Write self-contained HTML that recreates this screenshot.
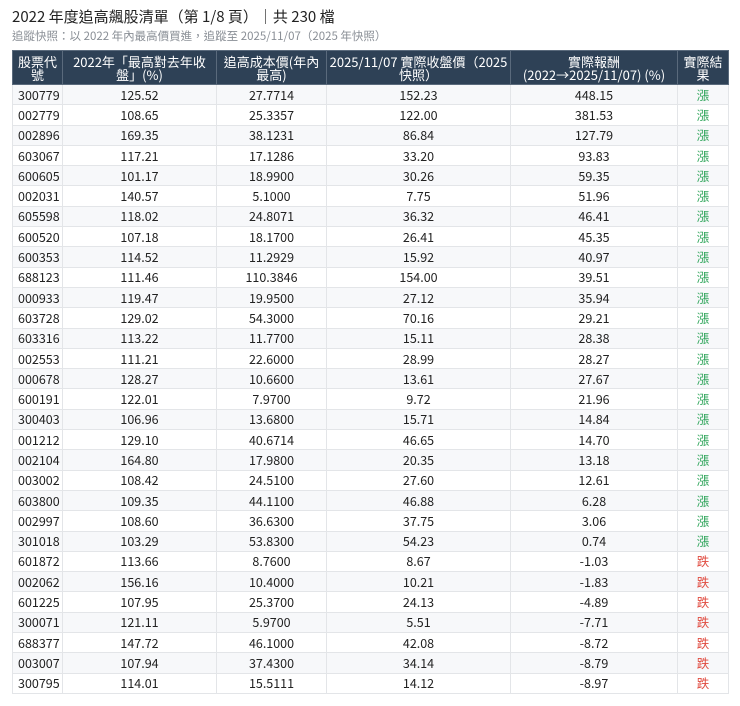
<!DOCTYPE html>
<html><head><meta charset="utf-8"><style>
body{margin:0;background:#fff;font-family:"Noto Sans CJK TC","Liberation Sans",sans-serif;color:#222}
.t{position:absolute;left:12px;top:6px;font-size:15px;color:#222;white-space:nowrap}
.s{position:absolute;left:12px;top:28px;font-size:11.5px;color:#8a8f96;white-space:nowrap}
table{position:absolute;left:12px;top:50px;width:716px;border-collapse:collapse;table-layout:fixed;font-size:12px}
th{background:#2e4156;color:#fff;font-weight:normal;line-height:13px;height:33px;padding:0 1px;border:1px solid #5a6a7c;font-size:13px}
td{height:19.3px;padding:0;border:1px solid #e3e5e8;text-align:center;line-height:18px;font-size:12.5px}
td:first-child{text-align:left;padding-left:5px}
tr:nth-child(even) td{background:#f7f8fa}
.u{color:#2ea55a}.d{color:#e04a3f}
</style></head><body>
<div class="t">2022 年度追高飆股清單（第 1/8 頁）｜共 230 檔</div>
<div class="s">追蹤快照：以 2022 年內最高價買進，追蹤至 2025/11/07（2025 年快照）</div>
<table>
<colgroup><col style="width:50px"><col style="width:154px"><col style="width:110px"><col style="width:184px"><col style="width:167px"><col style="width:51px"></colgroup>
<tr><th>股票代號</th><th>2022年「最高對去年收盤」(%)</th><th>追高成本價(年內最高)</th><th>2025/11/07 實際收盤價（2025 快照）</th><th>實際報酬<br>(2022→2025/11/07) (%)</th><th>實際結果</th></tr>
<tr><td>300779</td><td>125.52</td><td>27.7714</td><td>152.23</td><td>448.15</td><td class="u">漲</td></tr>
<tr><td>002779</td><td>108.65</td><td>25.3357</td><td>122.00</td><td>381.53</td><td class="u">漲</td></tr>
<tr><td>002896</td><td>169.35</td><td>38.1231</td><td>86.84</td><td>127.79</td><td class="u">漲</td></tr>
<tr><td>603067</td><td>117.21</td><td>17.1286</td><td>33.20</td><td>93.83</td><td class="u">漲</td></tr>
<tr><td>600605</td><td>101.17</td><td>18.9900</td><td>30.26</td><td>59.35</td><td class="u">漲</td></tr>
<tr><td>002031</td><td>140.57</td><td>5.1000</td><td>7.75</td><td>51.96</td><td class="u">漲</td></tr>
<tr><td>605598</td><td>118.02</td><td>24.8071</td><td>36.32</td><td>46.41</td><td class="u">漲</td></tr>
<tr><td>600520</td><td>107.18</td><td>18.1700</td><td>26.41</td><td>45.35</td><td class="u">漲</td></tr>
<tr><td>600353</td><td>114.52</td><td>11.2929</td><td>15.92</td><td>40.97</td><td class="u">漲</td></tr>
<tr><td>688123</td><td>111.46</td><td>110.3846</td><td>154.00</td><td>39.51</td><td class="u">漲</td></tr>
<tr><td>000933</td><td>119.47</td><td>19.9500</td><td>27.12</td><td>35.94</td><td class="u">漲</td></tr>
<tr><td>603728</td><td>129.02</td><td>54.3000</td><td>70.16</td><td>29.21</td><td class="u">漲</td></tr>
<tr><td>603316</td><td>113.22</td><td>11.7700</td><td>15.11</td><td>28.38</td><td class="u">漲</td></tr>
<tr><td>002553</td><td>111.21</td><td>22.6000</td><td>28.99</td><td>28.27</td><td class="u">漲</td></tr>
<tr><td>000678</td><td>128.27</td><td>10.6600</td><td>13.61</td><td>27.67</td><td class="u">漲</td></tr>
<tr><td>600191</td><td>122.01</td><td>7.9700</td><td>9.72</td><td>21.96</td><td class="u">漲</td></tr>
<tr><td>300403</td><td>106.96</td><td>13.6800</td><td>15.71</td><td>14.84</td><td class="u">漲</td></tr>
<tr><td>001212</td><td>129.10</td><td>40.6714</td><td>46.65</td><td>14.70</td><td class="u">漲</td></tr>
<tr><td>002104</td><td>164.80</td><td>17.9800</td><td>20.35</td><td>13.18</td><td class="u">漲</td></tr>
<tr><td>003002</td><td>108.42</td><td>24.5100</td><td>27.60</td><td>12.61</td><td class="u">漲</td></tr>
<tr><td>603800</td><td>109.35</td><td>44.1100</td><td>46.88</td><td>6.28</td><td class="u">漲</td></tr>
<tr><td>002997</td><td>108.60</td><td>36.6300</td><td>37.75</td><td>3.06</td><td class="u">漲</td></tr>
<tr><td>301018</td><td>103.29</td><td>53.8300</td><td>54.23</td><td>0.74</td><td class="u">漲</td></tr>
<tr><td>601872</td><td>113.66</td><td>8.7600</td><td>8.67</td><td>-1.03</td><td class="d">跌</td></tr>
<tr><td>002062</td><td>156.16</td><td>10.4000</td><td>10.21</td><td>-1.83</td><td class="d">跌</td></tr>
<tr><td>601225</td><td>107.95</td><td>25.3700</td><td>24.13</td><td>-4.89</td><td class="d">跌</td></tr>
<tr><td>300071</td><td>121.11</td><td>5.9700</td><td>5.51</td><td>-7.71</td><td class="d">跌</td></tr>
<tr><td>688377</td><td>147.72</td><td>46.1000</td><td>42.08</td><td>-8.72</td><td class="d">跌</td></tr>
<tr><td>003007</td><td>107.94</td><td>37.4300</td><td>34.14</td><td>-8.79</td><td class="d">跌</td></tr>
<tr><td>300795</td><td>114.01</td><td>15.5111</td><td>14.12</td><td>-8.97</td><td class="d">跌</td></tr>
</table>
</body></html>
